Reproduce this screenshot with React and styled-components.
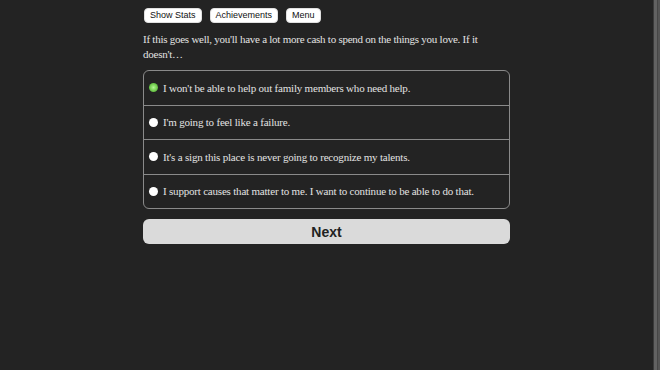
import React, { useState } from "react";
import styled, { createGlobalStyle } from "styled-components";

const Global = createGlobalStyle`
  html, body {
    background: #232323;
  }
  body {
    margin: 0 7px 0 0;
  }
`;

const ScrollTrack = styled.div`
  position: fixed;
  top: 0;
  right: 0;
  width: 7px;
  height: 100vh;
  background: linear-gradient(
    to right,
    #3a3a3a 0,
    #3a3a3a 1px,
    #626262 1px,
    #626262 4px,
    #464646 4px,
    #464646 5px,
    #555555 5px
  );
`;

const Page = styled.div`
  width: 367px;
  margin: 0 auto;
  padding: 8px 0 40px;
`;

const Toolbar = styled.div`
  display: flex;
  gap: 8px;
  padding-left: 1px;
`;

const ToolButton = styled.button`
  font-family: "Liberation Sans", Arial, sans-serif;
  font-size: 9px;
  line-height: 11px;
  height: 15px;
  color: #111;
  background: #fff;
  border: 1px solid #e0e0e0;
  border-radius: 4px;
  padding: 0 5px;
  cursor: pointer;
`;

const Story = styled.p`
  margin: 9px 0 8px;
  font-family: "Liberation Serif", "Times New Roman", serif;
  font-size: 11px;
  letter-spacing: -0.25px;
  line-height: 15px;
  color: #e2e2e2;
`;

const Choices = styled.div`
  border: 1px solid #8a8a8a;
  border-radius: 6px;
  display: flex;
  flex-direction: column;
  overflow: hidden;
`;

const Choice = styled.label`
  display: flex;
  align-items: center;
  gap: 5px;
  height: 33.5px;
  padding: 0 5px;
  font-family: "Liberation Serif", "Times New Roman", serif;
  font-size: 11px;
  letter-spacing: -0.2px;
  color: #e2e2e2;
  cursor: pointer;
  & + & {
    border-top: 1px solid #8a8a8a;
  }
`;

const Radio = styled.span`
  width: 9px;
  height: 9px;
  border-radius: 50%;
  flex: none;
  background: ${(p) =>
    p.$checked
      ? "radial-gradient(circle at 50% 50%, #b6f59a 0, #8ee06a 30%, #5cb83c 75%, #4f9d35 100%)"
      : "#ffffff"};
`;

const NextButton = styled.button`
  display: block;
  width: 100%;
  height: 25px;
  margin-top: 10px;
  border: none;
  border-radius: 6px;
  background: #dadada;
  color: #222;
  font-family: "Liberation Sans", Arial, sans-serif;
  font-weight: bold;
  font-size: 14px;
  cursor: pointer;
`;

const options = [
  "I won't be able to help out family members who need help.",
  "I'm going to feel like a failure.",
  "It's a sign this place is never going to recognize my talents.",
  "I support causes that matter to me. I want to continue to be able to do that.",
];

export default function App() {
  const [sel, setSel] = useState(0);
  return (
    <>
      <Global />
      <ScrollTrack />
      <Page>
        <Toolbar>
          <ToolButton>Show Stats</ToolButton>
          <ToolButton>Achievements</ToolButton>
          <ToolButton>Menu</ToolButton>
        </Toolbar>
        <Story>
          If this goes well, you'll have a lot more cash to spend on the things you love. If it
          doesn't…
        </Story>
        <Choices>
          {options.map((o, i) => (
            <Choice key={i} onClick={() => setSel(i)}>
              <Radio $checked={sel === i} />
              {o}
            </Choice>
          ))}
        </Choices>
        <NextButton>Next</NextButton>
      </Page>
    </>
  );
}
